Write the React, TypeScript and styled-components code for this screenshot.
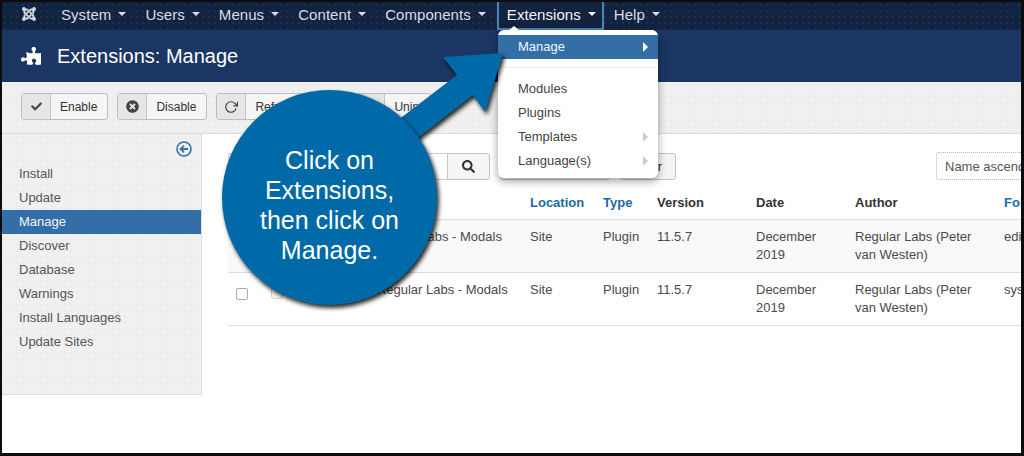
import { FaCheck, FaJoomla, FaPuzzlePiece, FaSearch, FaTimesCircle } from "react-icons/fa";
import { FiRotateCw } from "react-icons/fi";
import styled, { createGlobalStyle, css } from "styled-components";

const NAV_ITEMS = ["System", "Users", "Menus", "Content", "Components"];
const SIDE_ITEMS = [
  "Install",
  "Update",
  "Manage",
  "Discover",
  "Database",
  "Warnings",
  "Install Languages",
  "Update Sites",
];
const ROWS = [
  { name: "Button - Regular Labs - Modals", folder: "editors-xtd" },
  { name: "System - Regular Labs - Modals", folder: "system" },
];

const App = () => (
  <>
    <GlobalStyle />
    <Frame>
      <NavBar>
        <Logo>
          <FaJoomla size={16} />
        </Logo>
        {NAV_ITEMS.map((item) => (
          <NavItem key={item}>
            {item}
            <Caret />
          </NavItem>
        ))}
        <ActiveNavItem>
          Extensions
          <Caret />
        </ActiveNavItem>
        <NavItem>
          Help
          <Caret />
        </NavItem>
      </NavBar>

      <TitleBar>
        <PuzzleIcon size={20} />
        <Title>Extensions: Manage</Title>
      </TitleBar>

      <Toolbar>
        <ToolButton>
          <ToolIcon>
            <FaCheck size={11} />
          </ToolIcon>
          <ToolLabel>Enable</ToolLabel>
        </ToolButton>
        <ToolButton>
          <ToolIcon>
            <FaTimesCircle size={13} />
          </ToolIcon>
          <ToolLabel>Disable</ToolLabel>
        </ToolButton>
        <ToolButton>
          <ToolIcon>
            <FiRotateCw size={14} />
          </ToolIcon>
          <ToolLabel>Refresh Cache</ToolLabel>
        </ToolButton>
        <UninstallButton>
          <ToolIcon />
          <ToolLabel>Uninstall</ToolLabel>
        </UninstallButton>
      </Toolbar>

      <Body>
        <Sidebar>
          <CollapseRow>
            <svg width="16" height="16" viewBox="0 0 16 16" fill="none" stroke="#2f74ad">
              <circle cx="8" cy="8" r="7" strokeWidth="1.6" />
              <path d="M12 8H5M8 4.6 4.6 8 8 11.4" strokeWidth="1.8" />
            </svg>
          </CollapseRow>
          {SIDE_ITEMS.map((item) => (
            <SideItem key={item} $active={item === "Manage"}>
              {item}
            </SideItem>
          ))}
        </Sidebar>

        <Main>
          <Filters>
            <SearchInput />
            <SearchButton>
              <FaSearch size={13} />
            </SearchButton>
            <ToolsButton />
            <ClearButton>Clear</ClearButton>
            <SortSelect>Name ascending</SortSelect>
          </Filters>

          <HeadRow>
            <span />
            <span />
            <HeadLink>Name</HeadLink>
            <HeadLink>Location</HeadLink>
            <HeadLink>Type</HeadLink>
            <HeadText>Version</HeadText>
            <HeadText>Date</HeadText>
            <HeadText>Author</HeadText>
            <HeadLink>Folder</HeadLink>
          </HeadRow>
          {ROWS.map((row, index) => (
            <DataRow key={row.folder} $striped={index === 0}>
              <Checkbox />
              <StatusButton />
              <NameCell>{row.name}</NameCell>
              <Cell>Site</Cell>
              <Cell>Plugin</Cell>
              <Cell>11.5.7</Cell>
              <Cell>December 2019</Cell>
              <Cell>Regular Labs (Peter van Westen)</Cell>
              <NameCell>{row.folder}</NameCell>
            </DataRow>
          ))}
        </Main>
      </Body>

      <Menu>
        <MenuTip />
        <MenuItem $active>
          Manage
          <MenuArrow $active />
        </MenuItem>
        <MenuDivider />
        <MenuItem>Modules</MenuItem>
        <MenuItem>Plugins</MenuItem>
        <MenuItem>
          Templates
          <MenuArrow />
        </MenuItem>
        <MenuItem>
          Language(s)
          <MenuArrow />
        </MenuItem>
      </Menu>

      <CalloutArrow viewBox="0 0 1024 456" width="1024" height="456">
        <path d="M503 53 443 57 457 75 385 130 405 148 473 95 485 112Z" fill="#0069a8" />
      </CalloutArrow>
      <Bubble>
        Click on
        <br />
        Extensions,
        <br />
        then click on
        <br />
        Manage.
      </Bubble>
    </Frame>
  </>
);

export default App;

const dots = (color: string) => css`
  background-image: radial-gradient(${color} 0.6px, transparent 0.8px);
  background-size: 6px 6px;
`;

const GlobalStyle = createGlobalStyle`
  html, body {
    margin: 0;
    padding: 0;
    background: #fff;
  }
  body {
    font-family: "Liberation Sans", Arial, sans-serif;
    font-size: 13px;
    color: #444;
  }
`;

const Frame = styled.div`
  position: relative;
  box-sizing: border-box;
  width: 1024px;
  height: 456px;
  overflow: hidden;
  background: #fff;
  border: solid #0c0c0e;
  border-width: 2px 3px 3px 2px;
`;

const NavBar = styled.nav`
  display: flex;
  align-items: center;
  box-sizing: border-box;
  height: 28px;
  padding-bottom: 4px;
  background-color: #12233f;
  ${dots("#22406c")}
  color: #d9dde3;
  font-size: 15px;
  letter-spacing: 0.06px;
`;

const Logo = styled.div`
  display: flex;
  box-sizing: border-box;
  width: 59px;
  padding-left: 19px;
  color: #d5d9df;
`;

const NavItem = styled.div`
  display: flex;
  align-items: center;
  margin-right: 19px;
`;

const ActiveNavItem = styled(NavItem)`
  align-self: flex-start;
  box-sizing: border-box;
  height: 28px;
  margin: 0 10px 0 -8px;
  padding: 0 6px 2px 8px;
  background: #12233f;
  color: #f2f4f7;
  border: 2px solid #4a85b8;
  border-top: 0;
`;

const Caret = styled.span`
  margin-left: 7px;
  border-top: 4px solid currentColor;
  border-left: 4px solid transparent;
  border-right: 4px solid transparent;
`;

const TitleBar = styled.header`
  display: flex;
  align-items: center;
  gap: 16px;
  height: 52px;
  padding-left: 19px;
  background: #1c3664;
  color: #fff;
`;

const PuzzleIcon = styled(FaPuzzlePiece)`
  transform: scaleX(-1);
`;

const Title = styled.h1`
  margin: 0;
  font-size: 20px;
  font-weight: 400;
`;

const Toolbar = styled.div`
  display: flex;
  align-items: center;
  gap: 9px;
  box-sizing: border-box;
  height: 52px;
  padding: 0 0 2px 19px;
  background-color: #f0f0f0;
  ${dots("#e2e2e2")}
  border-bottom: 1px solid #dcdcdc;
`;

const ToolButton = styled.div`
  display: flex;
  box-sizing: border-box;
  height: 27px;
  background: #f5f5f5;
  border: 1px solid #bdbdbd;
  border-radius: 3px;
  color: #333;
  font-size: 12px;
  overflow: hidden;
  white-space: nowrap;
`;

const UninstallButton = styled(ToolButton)`
  width: 76px;
`;

const ToolIcon = styled.span`
  display: flex;
  align-items: center;
  justify-content: center;
  flex: 0 0 28px;
  background: #e6e6e6;
  border-right: 1px solid #c4c4c4;
  color: #444;
`;

const ToolLabel = styled.span`
  align-self: center;
  padding: 0 10px 0 9px;
`;

const Body = styled.div`
  display: flex;
`;

const Sidebar = styled.aside`
  box-sizing: border-box;
  width: 200px;
  height: 261px;
  background-color: #f0f0f0;
  ${dots("#e2e2e2")}
  border: solid #dcdcdc;
  border-width: 0 1px 1px 0;
`;

const CollapseRow = styled.div`
  display: flex;
  justify-content: flex-end;
  box-sizing: border-box;
  height: 28px;
  padding: 7px 9px 0 0;
`;

const SideItem = styled.div<{ $active?: boolean }>`
  height: 24px;
  padding-left: 17px;
  line-height: 24px;
  color: ${({ $active }) => ($active ? "#f3f6fa" : "#555")};
  background: ${({ $active }) => ($active ? "#336fa6" : "transparent")};
`;

const Main = styled.main`
  flex: 1;
  min-width: 0;
  padding: 19px 0 0 26px;
`;

const Filters = styled.div`
  display: flex;
  align-items: stretch;
  height: 27px;
  margin-bottom: 10px;
`;

const SearchInput = styled.div`
  box-sizing: border-box;
  width: 219px;
  border: 1px solid #ccc;
  border-right: 0;
  border-radius: 3px 0 0 3px;
`;

const SearchButton = styled.div`
  display: flex;
  align-items: center;
  justify-content: center;
  box-sizing: border-box;
  width: 43px;
  background: #f5f5f5;
  border: 1px solid #c4c4c4;
  border-radius: 0 3px 3px 0;
  color: #333;
`;

const ToolsButton = styled.div`
  box-sizing: border-box;
  width: 110px;
  margin-left: 10px;
  border: 1px solid #c4c4c4;
  border-radius: 3px;
`;

const ClearButton = styled.div`
  display: flex;
  align-items: center;
  justify-content: flex-end;
  box-sizing: border-box;
  width: 56px;
  margin-left: 10px;
  padding-right: 13px;
  background: #f5f5f5;
  border: 1px solid #c4c4c4;
  border-radius: 3px;
  color: #333;
`;

const SortSelect = styled.div`
  display: flex;
  align-items: center;
  flex: 1;
  min-width: 0;
  margin: -1px 0 0 260px;
  padding-left: 8px;
  border: 1px dotted #b8b8b8;
  border-right: 0;
  border-radius: 3px 0 0 3px;
  color: #555;
  white-space: nowrap;
  overflow: hidden;
`;

const columns = "43px 51px 208px 73px 54px 99px 99px 149px 100px";

const HeadRow = styled.div`
  display: grid;
  grid-template-columns: ${columns};
  box-sizing: border-box;
  height: 30px;
  padding-bottom: 5px;
  align-items: center;
  border-bottom: 1px solid #ddd;
  font-weight: 700;
  white-space: nowrap;
`;

const HeadLink = styled.span`
  color: #1a6ca8;
`;

const HeadText = styled.span`
  color: #333;
`;

const DataRow = styled.div<{ $striped?: boolean }>`
  display: grid;
  grid-template-columns: ${columns};
  box-sizing: border-box;
  height: 53px;
  padding-top: 8px;
  background: ${({ $striped }) => ($striped ? "#f9f9f9" : "#fff")};
  border-bottom: 1px solid #ddd;
  line-height: 18px;
`;

const Cell = styled.div`
  padding-right: 24px;
  color: #4a4a4a;
`;

const NameCell = styled(Cell)`
  padding-right: 0;
  white-space: nowrap;
`;

const Checkbox = styled.span`
  box-sizing: border-box;
  width: 12px;
  height: 12px;
  margin: 7px 0 0 8px;
  border: 1px solid #aaa;
  border-radius: 2px;
  background: #fff;
`;

const StatusButton = styled.span`
  box-sizing: border-box;
  width: 12px;
  height: 14px;
  margin-top: 4px;
  border: 1px solid #d0d0d0;
  border-radius: 3px;
  background: #f5f5f5;
`;

const Menu = styled.div`
  position: absolute;
  top: 28px;
  left: 496px;
  box-sizing: border-box;
  width: 160px;
  height: 148px;
  padding-top: 5px;
  background: #fff;
  border-radius: 6px;
  box-shadow: 0 3px 8px rgba(0, 0, 0, 0.4);
  color: #444;
`;

const MenuTip = styled.span`
  position: absolute;
  top: -4px;
  left: 10px;
  border-bottom: 5px solid #fff;
  border-left: 6px solid transparent;
  border-right: 6px solid transparent;
`;

const MenuItem = styled.div<{ $active?: boolean }>`
  position: relative;
  height: 24px;
  padding-left: 20px;
  line-height: 24px;
  color: ${({ $active }) => ($active ? "#f3f6fa" : "#444")};
  background: ${({ $active }) => ($active ? "#336fa6" : "transparent")};
`;

const MenuArrow = styled.span<{ $active?: boolean }>`
  position: absolute;
  top: 7px;
  right: 10px;
  border-left: 5px solid ${({ $active }) => ($active ? "#fff" : "#ccc")};
  border-top: 5px solid transparent;
  border-bottom: 5px solid transparent;
`;

const MenuDivider = styled.div`
  height: 1px;
  margin: 8px 1px 9px;
  background: #eee;
`;

const CalloutArrow = styled.svg`
  position: absolute;
  top: -2px;
  left: -2px;
  filter: drop-shadow(2px 3px 2px rgba(0, 0, 0, 0.85));
  pointer-events: none;
`;

const Bubble = styled.div`
  position: absolute;
  top: 88px;
  left: 220px;
  display: flex;
  align-items: center;
  justify-content: center;
  box-sizing: border-box;
  width: 215px;
  height: 215px;
  padding-top: 14px;
  border-radius: 50%;
  background: #0069a8;
  box-shadow: 2px 3px 4px rgba(0, 0, 0, 0.85);
  color: #fff;
  font-size: 25px;
  line-height: 30px;
  text-align: center;
`;
